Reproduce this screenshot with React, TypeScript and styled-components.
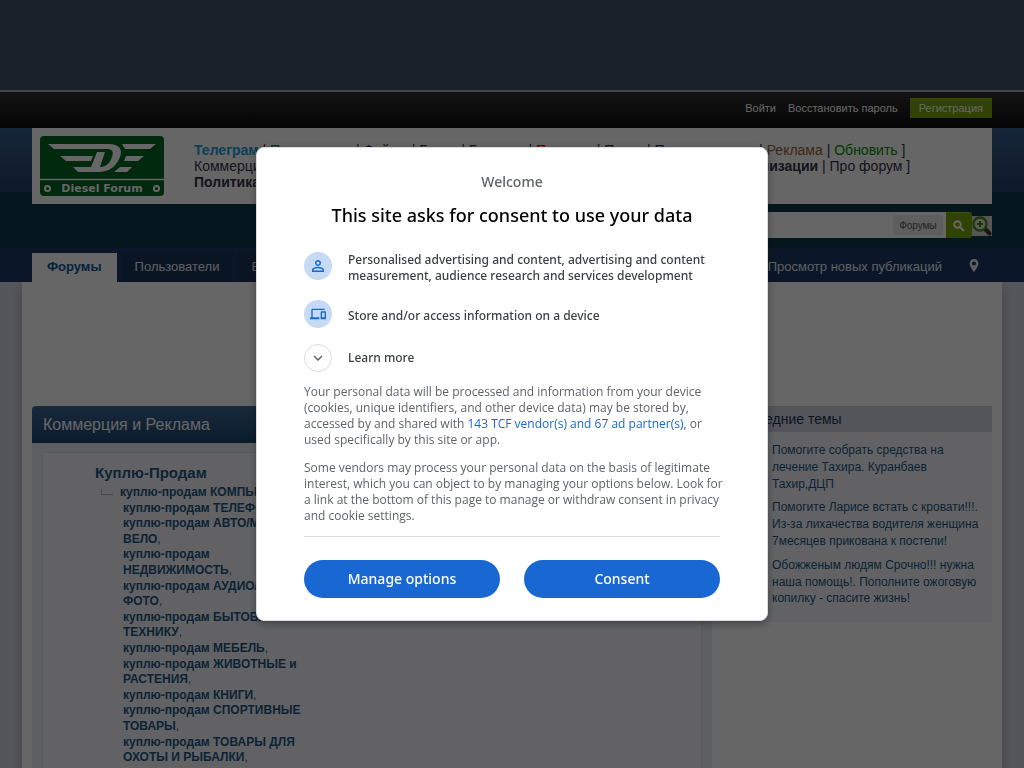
import React from 'react';
import styled, { createGlobalStyle } from 'styled-components';

const Global = createGlobalStyle`
  * { box-sizing: border-box; }
  html, body { margin: 0; height: 100%; overflow: hidden; }
  body { background: #d4d6e4; font-family: "Liberation Sans", Arial, sans-serif; font-size: 13px; color: #5a5a5a; }
  a { color: inherit; text-decoration: none; }
  h1, h2, h3, p, ul { margin: 0; padding: 0; }
  ul { list-style: none; }
  button, input { font: inherit; border: 0; padding: 0; }
`;

const AdStrip = styled.div`
  height: 92px;
  background: #435269;
  border-bottom: 2px solid #a5adbd;
`;

const UserBar = styled.nav`
  height: 36px;
  padding: 0 32px 4px;
  display: flex;
  align-items: center;
  justify-content: flex-end;
  gap: 12px;
  font-size: 11px;
  color: #fff;
  background: linear-gradient(#323232, #0c0c0c);
`;

const Register = styled.a`
  height: 20px;
  line-height: 18px;
  padding: 0 9px;
  background: #7ba60d;
  border-top: 1px solid #9bc61c;
`;

const Branding = styled.header`
  height: 120px;
  padding: 0 32px;
  background: linear-gradient(#38618f 0, #244168 64px, #0d384d 64px, #0d384d 100%);
`;

const BrandBox = styled.div`
  height: 76px;
  padding: 8px;
  display: flex;
  gap: 30px;
  background: #fff;
`;

const TopLinks = styled.div`
  padding-top: 6px;
  font-size: 14px;
  line-height: 16px;
  white-space: nowrap;
  color: #333348;
`;

const Tint = styled.a<{ $color: string }>`
  color: ${p => p.$color};
`;

const SearchRow = styled.form`
  margin-top: 8px;
  height: 26px;
  display: flex;
  justify-content: flex-end;
`;

const SearchField = styled.div`
  width: 240px;
  display: flex;
  align-items: center;
  background: #fff;
  padding-right: 3px;
`;

const SearchInput = styled.input`
  flex: 1;
  min-width: 0;
  background: transparent;
`;

const Scope = styled.button`
  width: 50px;
  height: 20px;
  border-radius: 3px;
  background: #eaeaea;
  color: #5a5a5a;
  font-size: 10px;
`;

const SearchButton = styled.button`
  width: 26px;
  display: grid;
  place-items: center;
  background: #7ba60d;
  border-top: 1px solid #9bc61c;
  border-radius: 0 3px 3px 0;
`;

const Advanced = styled.a`
  width: 20px;
  height: 20px;
  margin-top: 4px;
  background: #d8d8d8;
`;

const NavBar = styled.nav`
  height: 34px;
  padding: 5px 32px 0;
  display: flex;
  align-items: stretch;
  background: #1c3b66;
  font-size: 13px;
  line-height: 28px;
  color: #e8eaee;
`;

const Tab = styled.a<{ $active?: boolean }>`
  padding: 0 ${p => (p.$active ? 15 : 14)}px;
  margin-right: 4px;
  white-space: nowrap;
  font-weight: ${p => (p.$active ? 'bold' : 'normal')};
  color: ${p => (p.$active ? '#0b5794' : 'inherit')};
  background: ${p => (p.$active ? '#fff' : '#1b3558')};
`;

const NavEnd = styled.div`
  margin-left: auto;
  display: flex;
  gap: 18px;
  padding-right: 4px;
  align-items: flex-start;
`;

const PinLink = styled.a`
  height: 26px;
  display: flex;
  align-items: center;
`;

const Content = styled.main`
  margin: 0 22px;
  min-height: 600px;
  padding: 124px 10px 0;
  display: flex;
  gap: 10px;
  align-items: flex-start;
  background: #fff;
  box-shadow: 0 5px 9px rgba(0, 0, 0, 0.2);
`;

const Category = styled.section`
  flex: 1;
  min-width: 0;
`;

const CategoryTitle = styled.h2`
  height: 37px;
  padding: 0 11px;
  line-height: 35px;
  font-size: 16px;
  font-weight: normal;
  color: #fff;
  background: linear-gradient(#3f6694, #1c4473);
  border-top: 1px solid #36709c;
  border-radius: 4px 4px 0 0;
`;

const CategoryBody = styled.div`
  padding: 9px 10px;
  background: #ebedf2;
`;

const Forum = styled.div`
  min-height: 400px;
  padding: 10px 0 0 52px;
  background: #f4f6fa;
  border: 1px solid #dfe3eb;
`;

const ForumTitle = styled.h3`
  font-size: 15px;
  line-height: 20px;
  color: #225985;
`;

const Subforums = styled.ul`
  display: grid;
  grid-template-columns: 12px 200px;
  column-gap: 7px;
  padding: 2px 0 0 6px;
  font-size: 12px;
  line-height: 1.3;
`;

const Twig = styled.li`
  height: 6px;
  margin-top: 4px;
  border-left: 1px solid #b5b9c2;
  border-bottom: 1px solid #b5b9c2;
`;

const SubItem = styled.li<{ $first?: boolean }>`
  grid-column: 2;
  padding-left: ${p => (p.$first ? 0 : 3)}px;
  white-space: ${p => (p.$first ? 'nowrap' : 'normal')};
`;

const SubLink = styled.a`
  font-weight: bold;
  color: #225985;
`;

const Sidebar = styled.aside`
  width: 270px;
  background: #f4f6fa;
`;

const SidebarTitle = styled.h3`
  height: 26px;
  line-height: 26px;
  padding: 0 10px;
  font-size: 14px;
  font-weight: normal;
  color: #1d3652;
  background: #d1d4e3;
`;

const Topics = styled.ul`
  padding: 10px 10px 15px 50px;
  display: grid;
  gap: 7px;
  font-size: 12px;
  line-height: 1.4;
  color: #225985;
`;

const Overlay = styled.div`
  position: fixed;
  inset: 0;
  display: grid;
  place-items: center;
  background: rgba(0, 0, 0, 0.6);
  font-family: "Noto Sans", sans-serif;
`;

const Dialog = styled.section`
  width: 512px;
  padding: 24px 47px 22px;
  border-radius: 8px;
  border: 1px solid #dadce0;
  background: #fff;
  box-shadow: 0 3px 8px rgba(0, 0, 0, 0.35);
  color: #5f6368;
  font-size: 12px;
  line-height: 16px;
`;

const Welcome = styled.p`
  text-align: center;
  font-size: 14px;
  line-height: 20px;
  font-weight: 500;
`;

const Headline = styled.h1`
  margin-top: 11px;
  text-align: center;
  font-size: 18px;
  line-height: 24px;
  font-weight: 500;
  color: #000;
`;

const Purposes = styled.ul`
  margin-top: 25px;
  display: grid;
  gap: 16px;
  color: #3c4043;
  font-weight: 500;
`;

const Purpose = styled.li`
  display: grid;
  grid-template-columns: 28px 1fr;
  column-gap: 16px;
  min-height: 32px;
  align-items: center;
`;

const Disc = styled.span<{ $outline?: boolean }>`
  align-self: start;
  width: 28px;
  height: 28px;
  border-radius: 50%;
  display: grid;
  place-items: center;
  background: ${p => (p.$outline ? '#fff' : '#c6daf5')};
  border: ${p => (p.$outline ? '1px solid #dadce0' : '0')};
`;

const LearnMore = styled.button`
  margin-top: 12px;
  display: flex;
  align-items: center;
  gap: 16px;
  background: none;
  color: #3c4043;
  font-weight: 500;
`;

const Para = styled.p`
  margin-top: 12px;
  font-family: "Open Sans", sans-serif;
  white-space: nowrap;
`;

const VendorLink = styled.a`
  color: #1967d2;
  font-weight: 500;
`;

const Actions = styled.div`
  margin-top: 12px;
  padding-top: 23px;
  border-top: 1px solid #dadce0;
  display: grid;
  grid-template-columns: 1fr 1fr;
  gap: 24px;
`;

const Action = styled.button`
  height: 38px;
  border-radius: 19px;
  background: #1967d2;
  color: #fff;
  font-size: 14px;
  font-weight: 500;
`;

const subforums = [
  'ТЕЛЕФОНЫ', 'АВТО/МОТО/ВЕЛО', 'НЕДВИЖИМОСТЬ', 'АУДИО/ВИДЕО/ФОТО', 'БЫТОВУЮ ТЕХНИКУ', 'МЕБЕЛЬ',
  'ЖИВОТНЫЕ и РАСТЕНИЯ', 'КНИГИ', 'СПОРТИВНЫЕ ТОВАРЫ', 'ТОВАРЫ ДЛЯ ОХОТЫ И РЫБАЛКИ',
];

const Logo = () => (
  <svg width="124" height="60" viewBox="0 0 124 60" role="img" aria-label="Diesel Forum">
    <rect width="124" height="60" rx="4" fill="#006622" />
    <path d="M0 43.5H124" stroke="#fff" strokeWidth="1.5" />
    <g fill="#fff">
      <path d="M8 8H69C79 8 83 13 80 21C76 31 69 36 58 36H38L33 31H51L57 16H65L60 31C66 31 70 27 72 21C74 15 72 13 66 13H14Z" />
      <path d="M20 20H53L51 25H26Z" />
      <path d="M82 8H116L110 13H85Z" />
      <path d="M86 20H104L98 25H84Z" />
      <path d="M80 31H92L87 36H74Z" />
    </g>
    <g fill="none" stroke="#fff" strokeWidth="2">
      <circle cx="7.500" cy="52.500" r="2.600" /><circle cx="116.500" cy="52.500" r="2.600" />
    </g>
    <text x="62" y="56" textAnchor="middle" fill="#fff" fontFamily="DejaVu Sans" fontWeight="bold" fontSize="11">Diesel Forum</text>
  </svg>
);

export default function App() {
  return (
    <>
      <Global />
      <AdStrip />
      <UserBar>
        <a href="#login">Войти</a>
        <a href="#restore">Восстановить пароль</a>
        <Register href="#register">Регистрация</Register>
      </UserBar>
      <Branding>
        <BrandBox>
          <a href="#home"><Logo /></a>
          <TopLinks>
            <div>
              <Tint href="#tg" $color="#229fdc"><b>Телеграм</b></Tint> | <Tint href="#apps" $color="#007a33">Приложения</Tint> | <a href="#files">Файлы</a> | <a href="#blogs">Блоги</a> | <a href="#market">Барахло</a> | <Tint href="#rules" $color="#ff0000">Правила</Tint> | <a href="#search">Поиск</a> | <a href="#users">Пользователям</a> | <Tint href="#ads" $color="#a0622d">Реклама</Tint> | <Tint href="#refresh" $color="#009000">Обновить</Tint> ]
            </div>
            <div>
              <a href="#commerce">Коммерция и Реклама</a> | <a href="#help">Помощь пользователям форума</a> | <a href="#blog">Блоги</a> | <a href="#org"><b>Официальные организации</b></a> | <a href="#about">Про форум</a> ]
            </div>
            <div><a href="#privacy"><b>Политика конфиденциальности</b></a></div>
          </TopLinks>
        </BrandBox>
        <SearchRow>
          <SearchField>
            <SearchInput aria-label="Поиск" />
            <Scope type="button">Форумы</Scope>
          </SearchField>
          <SearchButton type="button" aria-label="Искать">
            <svg width="12" height="12" viewBox="0 0 12 12" fill="none" stroke="#fff" strokeWidth="2">
              <circle cx="4.500" cy="4.500" r="3.300" /><path d="M7 7L11 11" />
            </svg>
          </SearchButton>
          <Advanced href="#advanced" aria-label="Расширенный поиск">
            <svg width="20" height="20" viewBox="0 0 20 20" fill="none">
              <path d="M13 13L17.500 17.500" stroke="#333" strokeWidth="4" strokeLinecap="round" />
              <circle cx="8" cy="8" r="6.500" fill="#dfeed5" stroke="#4f8f22" strokeWidth="2.500" />
              <path d="M8 5V11M5 8H11" stroke="#3f7f1a" strokeWidth="2" />
            </svg>
          </Advanced>
        </SearchRow>
      </Branding>
      <NavBar>
        <Tab href="#forums" $active>Форумы</Tab>
        <Tab href="#members">Пользователи</Tab>
        <Tab href="#blogs">Блоги</Tab>
        <NavEnd>
          <a href="#new">Просмотр новых публикаций</a>
          <PinLink href="#map" aria-label="Карта">
            <svg width="28" height="14" viewBox="0 0 28 14">
              <path fillRule="evenodd" fill="#e8eaee" d="M14 0C11.500 0 9.600 2 9.600 4.400C9.600 7.500 14 13 14 13S18.400 7.500 18.400 4.400C18.400 2 16.500 0 14 0ZM14 2.400A2 2 0 1 1 14 6.400A2 2 0 1 1 14 2.400Z" />
            </svg>
          </PinLink>
        </NavEnd>
      </NavBar>
      <Content>
        <Category>
          <CategoryTitle>Коммерция и Реклама</CategoryTitle>
          <CategoryBody>
            <Forum>
              <ForumTitle><a href="#trade">Куплю-Продам</a></ForumTitle>
              <Subforums>
                <Twig />
                <SubItem $first><SubLink href="#computers">куплю-продам КОМПЬЮТЕРЫ</SubLink>,</SubItem>
                {subforums.map(name => (
                  <SubItem key={name}><SubLink href="#sub">куплю-продам {name}</SubLink>,</SubItem>
                ))}
              </Subforums>
            </Forum>
          </CategoryBody>
        </Category>
        <Sidebar>
          <SidebarTitle>Последние темы</SidebarTitle>
          <Topics>
            <li><a href="#t1">Помогите собрать средства на лечение Тахира. Куранбаев Тахир,ДЦП</a></li>
            <li><a href="#t2">Помогите Ларисе встать с кровати!!!. Из-за лихачества водителя женщина 7месяцев прикована к постели!</a></li>
            <li><a href="#t3">Обожженым людям Срочно!!! нужна наша помощь!. Пополните ожоговую копилку - спасите жизнь!</a></li>
          </Topics>
        </Sidebar>
      </Content>
      <Overlay>
        <Dialog role="dialog" aria-modal="true" aria-labelledby="consent-title">
          <Welcome>Welcome</Welcome>
          <Headline id="consent-title">This site asks for consent to use your data</Headline>
          <Purposes>
            <Purpose>
              <Disc>
                <svg width="18" height="18" viewBox="0 0 24 24" fill="#1967d2">
                  <path d="M12 5.900a2.100 2.100 0 1 1 0 4.200 2.100 2.100 0 0 1 0-4.200m0 9c2.970 0 6.100 1.460 6.100 2.100v1.100H5.900V17c0-.64 3.130-2.100 6.100-2.100M12 4C9.790 4 8 5.790 8 8s1.790 4 4 4 4-1.790 4-4-1.790-4-4-4zm0 9c-2.670 0-8 1.340-8 4v3h16v-3c0-2.660-5.330-4-8-4z" />
                </svg>
              </Disc>
              <span>Personalised advertising and content, advertising and content measurement, audience research and services development</span>
            </Purpose>
            <Purpose>
              <Disc>
                <svg width="16" height="16" viewBox="0 0 24 24" fill="#1967d2">
                  <path d="M4 6h18V4H4c-1.100 0-2 .9-2 2v11H0v3h14v-3H4V6zm19 2h-6c-.55 0-1 .45-1 1v10c0 .55.45 1 1 1h6c.55 0 1-.45 1-1V9c0-.55-.45-1-1-1zm-1 9h-4v-7h4v7z" />
                </svg>
              </Disc>
              <span>Store and/or access information on a device</span>
            </Purpose>
          </Purposes>
          <LearnMore type="button">
            <Disc $outline>
              <svg width="18" height="18" viewBox="0 0 24 24" fill="#5f6368">
                <path d="M7.410 8.590L12 13.170l4.590-4.580L18 10l-6 6-6-6z" />
              </svg>
            </Disc>
            <span>Learn more</span>
          </LearnMore>
          <Para>
            Your personal data will be processed and information from your device<br />
            (cookies, unique identifiers, and other device data) may be stored by,<br />
            accessed by and shared with <VendorLink href="#vendors">143 TCF vendor(s) and 67 ad partner(s)</VendorLink>, or<br />
            used specifically by this site or app.
          </Para>
          <Para>
            Some vendors may process your personal data on the basis of legitimate<br />
            interest, which you can object to by managing your options below. Look for<br />
            a link at the bottom of this page to manage or withdraw consent in privacy<br />
            and cookie settings.
          </Para>
          <Actions>
            <Action type="button">Manage options</Action>
            <Action type="button">Consent</Action>
          </Actions>
        </Dialog>
      </Overlay>
    </>
  );
}
